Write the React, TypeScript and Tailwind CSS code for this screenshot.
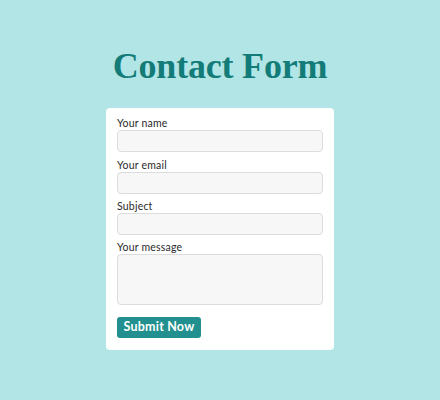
export default function App() {
  const fields = ['Your name', 'Your email', 'Subject'];

  return (
    <div className="min-h-[400px] w-full bg-[#b2e5e6] flex flex-col items-center font-['Lato',sans-serif]">
      <h1 className="mt-[48px] mb-[24px] text-[36px] leading-none font-bold text-[#137c78] font-['Liberation_Serif',serif] tracking-[-0.2px]">
        Contact Form
      </h1>

      <form className="w-[228px] bg-white rounded-[4px] px-[11px] pt-[8px] pb-[12px] flex flex-col">
        {fields.map((label) => (
          <div key={label} className="flex flex-col mb-[5.5px]">
            <label className="text-[10.5px] leading-[14px] text-[#2a2a2a] tracking-[0.2px]">{label}</label>
            <input
              type="text"
              className="h-[22px] w-full bg-[#f7f7f7] border border-[#dcdcdc] rounded-[4px]"
            />
          </div>
        ))}
        <div className="flex flex-col">
          <label className="text-[10.5px] leading-[13.5px] text-[#2a2a2a] tracking-[0.2px]">Your message</label>
          <textarea className="h-[51px] w-full bg-[#f7f7f7] border border-[#dcdcdc] rounded-[4px] resize-none" />
        </div>
        <button
          type="button"
          className="mt-[12px] self-start h-[21px] w-[84px] bg-[#22908e] text-white text-[12.5px] font-bold rounded-[3px] leading-none tracking-[0.2px]"
        >
          Submit Now
        </button>
      </form>
    </div>
  );
}
